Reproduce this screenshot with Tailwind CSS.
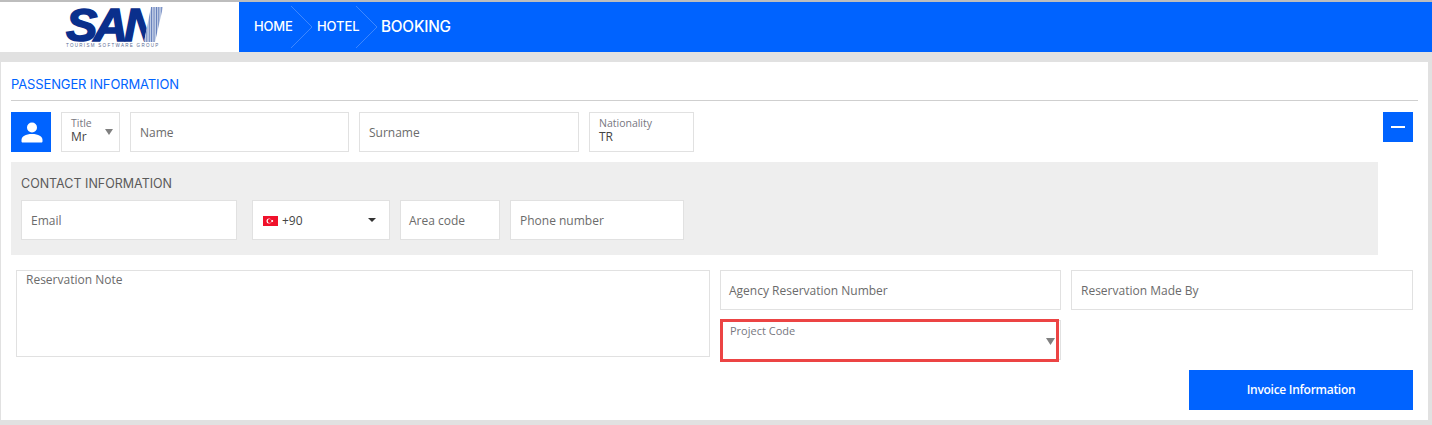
<!DOCTYPE html>
<html lang="en">
<head>
    <meta charset="UTF-8">
    <title>Booking</title>
    <script src="https://cdn.jsdelivr.net/npm/@tailwindcss/browser@4"></script>
</head>
<body class="bg-[#e1e1e1] font-['Open_Sans',sans-serif] h-[425px] overflow-hidden">
    <!-- Header -->
    <header class="mt-[2px] h-[50px] flex bg-[#0063ff] relative before:absolute before:-top-[2px] before:left-0 before:right-0 before:h-[2px] before:bg-[#bdbdbd]">
        <div class="w-[239px] h-full bg-white relative shrink-0">
            <!-- Logo -->
            <div class="absolute left-[66px] top-[5px] w-[97px] h-[42px]">
                <span class="absolute left-0 top-[1px] font-['Liberation_Sans',sans-serif] font-bold italic text-[47px] leading-[33px] tracking-[-3.5px] text-[#0a2f8c] [-webkit-text-stroke:1.6px_#0a2f8c]">SAN</span>
                <svg class="absolute left-[78px] top-0" width="19" height="35" viewBox="0 0 19 35">
                    <defs>
                        <pattern id="hatch" width="2.4" height="2.4" patternUnits="userSpaceOnUse">
                            <rect width="1.2" height="2.4" fill="#5d78b8"/>
                            <rect x="1.2" width="1.2" height="2.4" fill="#c3cfe6"/>
                        </pattern>
                    </defs>
                    <polygon points="7,0 19,0 11,35 0,35" fill="#fff"/>
                    <polygon points="7,0 19,0 11,35 0,35" fill="url(#hatch)"/>
                </svg>
                <span class="absolute left-0 top-[36px] font-['Liberation_Sans',sans-serif] text-[4.5px] leading-[6px] tracking-[1.3px] text-[#5b6c93] whitespace-nowrap">TOURISM SOFTWARE GROUP</span>
            </div>
        </div>
        <nav class="flex items-center text-white font-['Inter',sans-serif] font-medium">
            <span class="ml-[15px] text-[13px] w-[39px] tracking-[-0.2px]">HOME</span>
            <svg class="-ml-[3px]" width="24" height="44" viewBox="0 0 24 44"><path d="M1 1 L22 22 L1 43" fill="none" stroke="#3d87ff" stroke-width="1"/></svg>
            <span class="ml-[3px] text-[13px] w-[41px] tracking-[-0.1px]">HOTEL</span>
            <svg class="-ml-[3px]" width="24" height="44" viewBox="0 0 24 44"><path d="M1 1 L22 22 L1 43" fill="none" stroke="#3d87ff" stroke-width="1"/></svg>
            <span class="ml-[2px] text-[15.3px] tracking-[-0.2px]">BOOKING</span>
        </nav>
    </header>

    <!-- Passenger card -->
    <main class="mt-[10px] ml-[1px] w-[1427px] h-[358px] bg-white pt-[14px] px-[10px]">
        <h2 class="h-[25px] w-[1407px] border-b border-[#cfcfcf] font-['Inter',sans-serif] text-[13px] leading-[16px] tracking-[-0.13px] text-[#0063ff]">PASSENGER INFORMATION</h2>

        <div class="mt-[11px] flex h-[40px] relative">
            <div class="w-[40px] h-[40px] bg-[#0063ff] flex items-center justify-center">
                <svg class="ml-[2px]" width="22" height="22" viewBox="0 0 22 22" fill="#fff">
                    <circle cx="11" cy="6.5" r="5"/>
                    <path d="M0.5 20.5 v-1.5 c0-3.5 4-6 10.500-6 s10.500 2.500 10.500 6 v1.500 c0 .5-.5 1-1 1 h-19 c-.5 0-1-.5-1-1z"/>
                </svg>
            </div>
            <div class="ml-[10px] w-[59px] border border-[#e1e1e1] pl-[9px] relative">
                <div class="text-[10.5px] leading-[12px] mt-[4px] text-[#77777f]">Title</div>
                <div class="text-[12px] leading-[16px] text-[#444]">Mr</div>
                <svg class="absolute right-[6px] top-[16px]" width="8" height="6" viewBox="0 0 8 6"><path d="M0 0 H8 L4 6z" fill="#808080"/></svg>
            </div>
            <div class="ml-[10px] w-[219px] border border-[#e1e1e1] pl-[9px] pt-[2px] flex items-center text-[12px] text-[#6b6b6b]">Name</div>
            <div class="ml-[10px] w-[220px] border border-[#e1e1e1] pl-[9px] pt-[2px] flex items-center text-[12px] text-[#6b6b6b]">Surname</div>
            <div class="ml-[10px] w-[105px] border border-[#e1e1e1] pl-[9px] relative">
                <div class="text-[10.5px] leading-[12px] mt-[4px] text-[#77777f]">Nationality</div>
                <div class="text-[12px] leading-[16px] text-[#444]">TR</div>
            </div>
            <!-- Collapse button -->
            <button class="absolute left-[1372px] top-0 w-[30px] h-[30px] bg-[#0063ff] flex items-center justify-center">
                <span class="block w-[14px] h-[2px] bg-white"></span>
            </button>
        </div>

        <!-- Contact -->
        <section class="mt-[10px] w-[1367px] h-[93px] bg-[#eeeeee] px-[10px] pt-[14px]">
            <h3 class="font-['Inter',sans-serif] text-[12.5px] leading-[16px] text-[#5a5a5a]">CONTACT INFORMATION</h3>
            <div class="mt-[8px] flex h-[40px]">
                <div class="w-[216px] bg-white border border-[#e1e1e1] pl-[9px] pt-[2px] flex items-center text-[12px] text-[#6b6b6b]">Email</div>
                <div class="ml-[15px] w-[138px] bg-white border border-[#e1e1e1] pl-[10px] pt-[2px] flex items-center relative text-[12px] text-[#444]">
                    <svg width="15" height="10" viewBox="0 0 15 10" class="mr-[4px]">
                        <rect width="15" height="10" fill="#f0112b"/>
                        <circle cx="6" cy="5" r="2.500" fill="#fff"/>
                        <circle cx="6.700" cy="5" r="2" fill="#f0112b"/>
                        <circle cx="9.200" cy="5" r="1" fill="#fff"/>
                    </svg>
                    +90
                    <svg class="absolute right-[13px] top-[17px]" width="8" height="4" viewBox="0 0 8 4"><path d="M0 0 H8 L4 4z" fill="#333"/></svg>
                </div>
                <div class="ml-[10px] w-[100px] bg-white border border-[#e1e1e1] pl-[8px] pt-[2px] flex items-center text-[12px] text-[#6b6b6b]">Area code</div>
                <div class="ml-[10px] w-[174px] bg-white border border-[#e1e1e1] pl-[9px] pt-[2px] flex items-center text-[12px] text-[#6b6b6b]">Phone number</div>
            </div>
        </section>

        <!-- Notes and references -->
        <div class="mt-[15px] ml-[5px] flex">
            <div class="w-[694px] h-[87px] border border-[#e1e1e1] pl-[9px] pt-[1px] text-[12px] leading-[15px] text-[#6b6b6b]">Reservation Note</div>
            <div class="ml-[10px] w-[693px]">
                <div class="flex gap-[10px]">
                    <div class="w-[341px] h-[40px] border border-[#e1e1e1] pl-[8px] pt-[2px] flex items-center text-[12px] text-[#6b6b6b]">Agency Reservation Number</div>
                    <div class="w-[342px] h-[40px] border border-[#e1e1e1] pl-[9px] pt-[2px] flex items-center text-[12px] text-[#6b6b6b]">Reservation Made By</div>
                </div>
                <div class="mt-[10px] w-[341px] h-[40px] border border-[#e1e1e1] relative">
                    <div class="absolute -left-[1px] -top-[2px] w-[339px] h-[43px] bg-white border-[3px] border-[#ec4444] pl-[7px] pt-[2px] text-[11px] leading-[14px] text-[#77777f]">Project Code</div>
                    <svg class="absolute right-[5px] top-[17px]" width="9" height="7" viewBox="0 0 9 7"><path d="M0 0 H9 L4.500 7z" fill="#808080"/></svg>
                </div>
            </div>
        </div>
        <div class="mt-[10px] w-[1402px] flex justify-end">
            <button class="w-[224px] h-[40px] bg-[#0063ff] text-white text-[12px] font-semibold tracking-[-0.28px]">Invoice Information</button>
        </div>
    </main>
</body>
</html>
